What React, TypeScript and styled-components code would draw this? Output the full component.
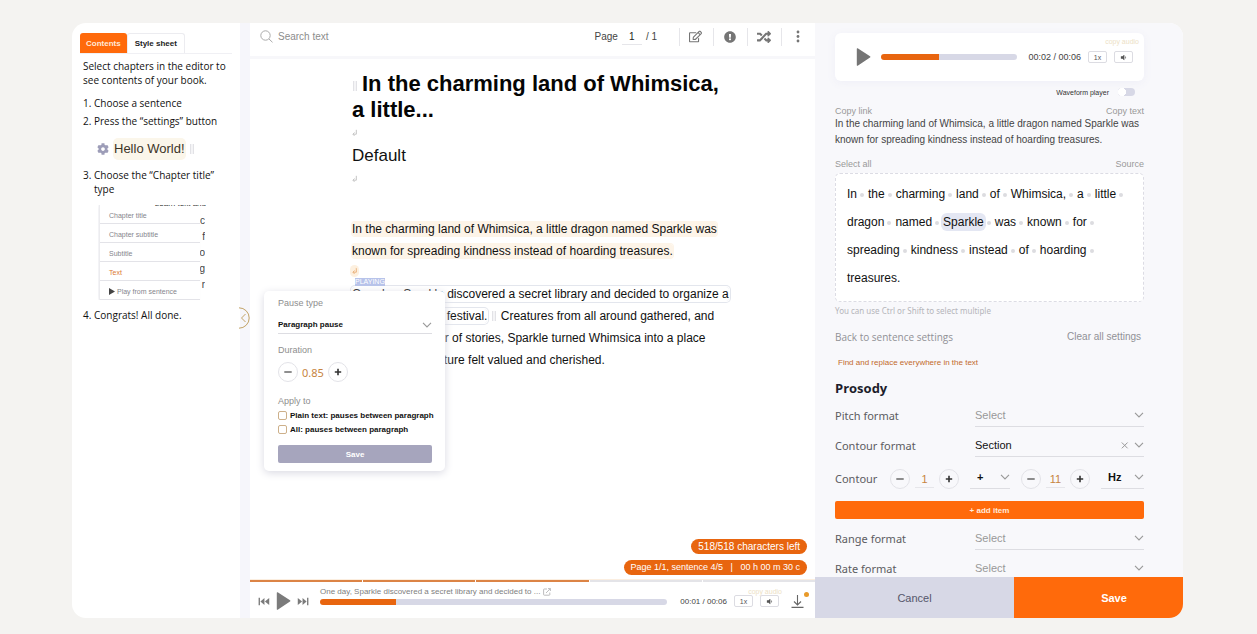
import React from 'react';
import styled, { createGlobalStyle, css } from 'styled-components';
import { FaCog, FaExclamationCircle, FaRandom, FaRegEdit, FaVolumeDown } from 'react-icons/fa';

const sans = '"Liberation Sans", Arial, sans-serif';
const humanist = '"Open Sans", "Noto Sans", sans-serif';

const orange = '#ff6a0b';
const deepOrange = '#e8650f';
const lilac = '#d7d8e6';
const mist = '#f8f8fb';
const cream = '#fdf4e8';

const GlobalStyle = createGlobalStyle`
  *, *::before, *::after { box-sizing: border-box; }
  body { margin: 0; background: #f4f3f1; font-family: ${sans}; color: #111; }
  button, input, select { font: inherit; color: inherit; margin: 0; padding: 0; border: 0; background: none; border-radius: 0; outline: none; }
  button { cursor: pointer; }
  h1, h2, p, ol { margin: 0; padding: 0; }
  a { color: inherit; text-decoration: none; }
  svg { display: block; flex: none; }
`;

const Page = styled.div`
  height: 100vh;
  padding: 23px 74px 16px 72px;
`;

const Workspace = styled.div`
  height: 100%;
  display: grid;
  grid-template-columns: 168px minmax(0, 1fr) 368px;
  border-radius: 14px;
  overflow: hidden;
  background: #fff;
`;

/* ---------- Contents sidebar ---------- */

const Sidebar = styled.aside`
  padding: 10px 8px 0;
  font-family: ${humanist};
  font-size: 10px;
  line-height: 14px;
`;

const Tabs = styled.div`
  display: flex;
  border-bottom: 1px solid #f0f0f4;
  margin-bottom: 5px;
`;

const Tab = styled.button<{ $active?: boolean }>`
  height: 20px;
  padding: 0 6px;
  font: bold 8px ${sans};
  border-radius: 3px 3px 0 0;
  ${p => p.$active
    ? css`background: ${orange}; color: #ffe9da;`
    : css`border: 1px solid #ececf0; border-bottom: 0; padding: 0 7px; color: #222;`}
`;

const Steps = styled.ol`
  list-style: none;
  padding: 0 3px;
`;

const Intro = styled.p`
  padding: 0 3px;
  margin-bottom: 9px;
`;

const Step = styled.li`
  display: grid;
  grid-template-columns: 11px minmax(0, 1fr);
  margin-bottom: 4px;
`;

const Sample = styled.div`
  display: flex;
  align-items: center;
  gap: 5px;
  padding-left: 14px;
  margin: 11px 0 9px;
  font: 13px/20px ${sans};
  color: #3b3427;
  svg { color: #9d9db8; }
`;

const SampleText = styled.span`
  background: #fbf6ea;
  border-radius: 4px;
  box-shadow: 0 0 0 1px #fbf6ea;
`;

const Handle = styled.span`
  display: inline-block;
  width: 4px;
  height: 10px;
  border: solid #e2e2e6;
  border-width: 0 1px;
  background: #f4f4f6;
`;

const MenuShot = styled.div`
  display: grid;
  grid-template-columns: 102px 5px;
  width: 108px;
  position: relative;
  margin: 9px 0 8px 15px;
  overflow: hidden;
  font-family: ${sans};
`;

const ShotMenu = styled.div`
  border-left: 1px solid #ececef;
  box-shadow: -2px 0 4px #f0f0f3;
  margin-left: 1px;
`;

const ShotItem = styled.div<{ $accent?: boolean }>`
  display: flex;
  align-items: center;
  gap: 2px;
  height: 19px;
  padding: 3px 0 0 9px;
  border-bottom: 1px solid #e3e3e8;
  font-size: 7px;
  color: ${p => (p.$accent ? '#dc7b33' : '#85858c')};
`;

const ShotEdge = styled.div`
  display: flex;
  flex-direction: column;
  padding-top: 8px;
  direction: rtl;
  overflow: hidden;
  font-size: 10px;
  line-height: 16px;
  color: #444;
`;

const ShotHeading = styled.div`
  position: absolute;
  top: -5px;
  right: 0;
  font: 8px/8px ${sans};
  color: #333;
`;

/* ---------- Editor ---------- */

const Editor = styled.main`
  position: relative;
  display: flex;
  flex-direction: column;
  min-width: 0;
  border-left: 10px solid #f6f6fb;
`;

const CollapseButton = styled.button`
  position: absolute;
  left: -11px;
  top: 284px;
  width: 12px;
  height: 22px;
  color: #c2a266;
`;

const Toolbar = styled.header`
  display: flex;
  align-items: center;
  height: 36px;
  padding: 0 0 6px 10px;
  border-bottom: 3px solid #f7f7fa;
  font-size: 10px;
  color: #444;
`;

const SearchField = styled.label`
  display: flex;
  align-items: center;
  gap: 5px;
  flex: 1;
  color: #aaa;
  input { width: 120px; }
  input::placeholder { color: #8c8c8c; opacity: 1; }
`;

const Pager = styled.label`
  display: flex;
  align-items: center;
  gap: 4px;
  margin-right: 22px;
  input {
    width: 20px;
    height: 16px;
    text-align: center;
    border-bottom: 1px solid #e6e6ea;
    color: #222;
  }
`;

const ToolButton = styled.button`
  display: grid;
  place-items: center;
  width: 34px;
  height: 18px;
  padding-right: 2px;
  border-left: 1px solid #e6e6ea;
  color: #757575;
`;

const Document = styled.article`
  flex: 1;
  min-height: 0;
  max-width: 482px;
  padding: 12px 0 0 102px;
  font-size: 12px;
  line-height: 22px;
`;

const Title = styled.h1`
  font-size: 22px;
  line-height: 26px;
  color: #050505;
  ${Handle} { margin: 0 5px 0 1px; }
`;

const Subtitle = styled.p`
  font-size: 17px;
  line-height: 26px;
  color: #111;
`;

const BreakMark = styled.div<{ $tall?: boolean }>`
  display: flex;
  align-items: center;
  height: 20px;
  margin-bottom: ${p => (p.$tall ? '29px' : '0')};
  color: #c4c4c4;
`;

const PausedMark = styled.div`
  display: flex;
  align-items: center;
  height: 21px;
  padding-bottom: 3px;
  color: #eab27d;
  svg { background: #fdf0df; border-radius: 3px; box-shadow: 0 0 0 2px #fdf0df; }
`;

const Spoken = styled.span`
  background: ${cream};
  border-radius: 3px;
  box-shadow: 0 0 0 1px ${cream};
  -webkit-box-decoration-break: clone;
  box-decoration-break: clone;
`;

const Playing = styled.span`
  border-radius: 3px;
  box-shadow: 0 0 0 1px #fff, 0 0 0 2px #e3e6ed;
  -webkit-box-decoration-break: clone;
  box-decoration-break: clone;
`;

const PlayingParagraph = styled.p`
  position: relative;
  ${Handle} { margin: 0 1px 0 5px; vertical-align: -1px; }
`;

const PlayingTag = styled.span`
  position: absolute;
  left: 3px;
  top: -5px;
  font-size: 7px;
  line-height: 8px;
  color: #fff;
  background: #b7c3ea;
`;

const Badges = styled.div`
  display: flex;
  flex-direction: column;
  align-items: flex-end;
  gap: 6px;
  padding: 0 8px 4px 0;
`;

const Badge = styled.span<{ $large?: boolean }>`
  padding: 0 7px;
  border-radius: 8px;
  font-size: ${p => (p.$large ? '10px' : '9px')};
  line-height: 15px;
  white-space: pre;
  color: #fff;
  background: ${deepOrange};
`;

const Segments = styled.div`
  display: flex;
  gap: 1px;
  border-top: 1px solid #fbeee0;
`;

const Segment = styled.span<{ $done?: boolean }>`
  flex: 1;
  height: 2px;
  background: ${p => (p.$done ? '#dc8446' : '#e4e4e8')};
`;

const PlayerBar = styled.footer`
  display: flex;
  align-items: center;
  height: 36px;
  padding: 2px 11px 0 8px;
  color: #7b7b7b;
`;

const Transport = styled.div`
  display: flex;
  align-items: center;
  gap: 6px;
  margin-right: 11px;
  button { display: block; }
`;

const NowPlaying = styled.div`
  flex: 1;
  min-width: 0;
  margin-right: 13px;
  padding-bottom: 11px;
  font-size: 8px;
  line-height: 12px;
  color: #808080;
`;

const NowTitle = styled.div`
  display: flex;
  align-items: center;
  gap: 3px;
  height: 12px;
  margin-bottom: 1px;
  svg { color: #b5b5b8; }
`;

const Scrubber = styled.input.attrs({ type: 'range' })<{ $played: number }>`
  appearance: none;
  display: block;
  width: 100%;
  height: 6px;
  border-radius: 3px;
  background: linear-gradient(to right, ${deepOrange} ${p => p.$played}%, ${lilac} ${p => p.$played}%);
  &::-webkit-slider-thumb { appearance: none; width: 0; height: 6px; }
`;

const Clock = styled.span<{ $small?: boolean }>`
  font-size: ${p => (p.$small ? '8px' : '9px')};
  white-space: nowrap;
  color: #444;
`;

const Extras = styled.div`
  position: relative;
  display: flex;
  gap: 7px;
  margin-left: 7px;
`;

const SmallButton = styled.button`
  display: grid;
  place-items: center;
  width: 19px;
  height: 12px;
  font-size: 7px;
  color: #555;
  background: #fff;
  border: 1px solid #dcdce2;
  border-radius: 2px;
`;

const CopyAudio = styled.a<{ $raised?: boolean }>`
  position: absolute;
  right: ${p => (p.$raised ? '-6px' : '-3px')};
  bottom: ${p => (p.$raised ? '18px' : '12px')};
  font-size: 7px;
  line-height: 7px;
  white-space: nowrap;
  color: #eddfc6;
`;

const DownloadButton = styled.button`
  position: relative;
  margin-left: 12px;
  color: #666;
  &::after {
    content: '';
    position: absolute;
    right: -5px;
    top: -2px;
    width: 5px;
    height: 5px;
    border-radius: 50%;
    background: #e89a2a;
  }
`;

/* ---------- Pause popup ---------- */

const Popup = styled.form`
  position: absolute;
  left: 14px;
  top: 268px;
  width: 181px;
  padding: 6px 13px 8px 14px;
  border-radius: 5px;
  background: #fff;
  box-shadow: 0 2px 8px #d9d9e2;
  font-size: 8px;
  font-weight: bold;
`;

const Caption = styled.div`
  display: block;
  font-size: 9px;
  font-weight: normal;
  line-height: 13px;
  color: #8e8e8e;
`;

const SelectBox = styled.div<{ $muted?: boolean; $size?: number }>`
  position: relative;
  display: flex;
  align-items: center;
  height: 22px;
  padding-bottom: 2px;
  border-bottom: 1px solid #dddde2;
  font-size: ${p => p.$size ?? 11}px;
  color: ${p => (p.$muted ? '#999' : '#111')};
  select { appearance: none; flex: 1; min-width: 0; width: 100%; height: 100%; }
  svg { pointer-events: none; color: #999; }
`;

const PopupSelect = styled(SelectBox)`
  height: 18px;
  padding: 0;
  margin: 6px 0 10px;
`;

const DurationSlot = styled.div`
  padding: 5px 0 13px;
`;

const Stepper = styled.div<{ $plain?: boolean }>`
  display: grid;
  grid-template-columns: 20px ${p => (p.$plain ? '30px' : '19px')} 20px;
  gap: ${p => (p.$plain ? '0' : '5px')};
  align-items: center;
  input {
    width: 100%;
    height: 18px;
    text-align: center;
    font: 11px ${p => (p.$plain ? '"Noto Sans", sans-serif' : sans)};
    color: #c7843f;
    border-bottom: ${p => (p.$plain ? '0' : '1px solid #e6e6ea')};
  }
`;

const RoundButton = styled.button`
  display: grid;
  place-items: center;
  width: 20px;
  height: 20px;
  border: 1px solid #e3e3e8;
  border-radius: 50%;
  color: #333;
`;

const CheckLine = styled.label`
  display: flex;
  align-items: center;
  gap: 3px;
  height: 14px;
  white-space: nowrap;
  input {
    appearance: none;
    flex: none;
    width: 9px;
    height: 9px;
    border: 1px solid #cdb08a;
    border-radius: 2px;
  }
`;

const PopupSave = styled.button`
  width: 100%;
  height: 18px;
  margin-top: 9px;
  border-radius: 2px;
  color: #fff;
  background: #a6a5bd;
`;

/* ---------- Sentence settings ---------- */

const Settings = styled.section`
  display: flex;
  flex-direction: column;
  min-height: 0;
  background: ${mist};
`;

const SettingsBody = styled.div`
  flex: 1;
  min-height: 0;
  overflow-y: auto;
  scrollbar-width: none;
  padding: 10px 39px 0 20px;
`;

const AudioCard = styled.div`
  display: flex;
  align-items: center;
  height: 48px;
  padding: 0 11px 0 21px;
  border-radius: 6px;
  background: #fff;
  box-shadow: 0 2px 10px #efeff7;
  color: #757575;
  ${Scrubber} { flex: 1; min-width: 0; width: auto; margin: 0 11px 0 10px; }
`;

const SwitchLine = styled.label`
  display: flex;
  align-items: center;
  justify-content: flex-end;
  gap: 9px;
  height: 22px;
  padding-right: 9px;
  font-size: 7px;
  color: #333;
  input {
    appearance: none;
    width: 17px;
    height: 8px;
    border-radius: 4px;
    background: radial-gradient(circle at 4px 4px, #fff 4px, ${lilac} 4px);
  }
`;

const LinkRow = styled.div`
  display: flex;
  justify-content: space-between;
  font-size: 9px;
  line-height: 9px;
  color: #999;
  margin-top: 4px;
`;

const Quote = styled.p`
  font-size: 10px;
  line-height: 16px;
  color: #444;
  margin-bottom: 12px;
`;

const WordBox = styled.div`
  display: flex;
  flex-wrap: wrap;
  margin-top: 4px;
  padding: 6px 6px 9px 11px;
  border: 1px dashed #dcdce4;
  border-radius: 5px;
  background: #fff;
  font-size: 12px;
`;

const Word = styled.span<{ $selected?: boolean }>`
  display: flex;
  align-items: center;
  height: 28px;
  span {
    line-height: 14px;
    ${p => p.$selected && css`background: #e4e7f3; border-radius: 4px; box-shadow: 0 0 0 2px #e4e7f3;`}
  }
  &:not(:last-child)::after {
    content: '';
    width: 4px;
    height: 4px;
    margin: 2px 4px 0 3px;
    border-radius: 50%;
    background: #dcdce0;
  }
`;

const Hint = styled.p`
  margin-top: 3px;
  font: 8px/12px "Noto Sans", sans-serif;
  color: #b5b5ba;
`;

const BackRow = styled.div`
  display: flex;
  justify-content: space-between;
  margin-top: 12px;
  padding-right: 3px;
  font-size: 10px;
  line-height: 16px;
  color: #919196;
  a:first-child { font-family: ${humanist}; }
`;

const FindLink = styled.a`
  display: block;
  margin-top: 12px;
  padding-left: 3px;
  font-size: 8px;
  line-height: 12px;
  color: #c26a2c;
`;

const GroupTitle = styled.h2`
  margin-top: 10px;
  font: bold 13px/18px ${humanist};
  color: #1d1d2b;
`;

const FieldRow = styled.div`
  display: grid;
  grid-template-columns: 140px minmax(0, 1fr);
  align-items: center;
  height: 22px;
  margin-top: 8px;
`;

const FieldLabel = styled.label`
  font: 11px/16px "Noto Sans", sans-serif;
  color: #5c5c61;
`;

const ContourRow = styled.div`
  display: grid;
  grid-template-columns: 44px 69px 40px 69px 43px;
  justify-content: space-between;
  align-items: center;
  height: 20px;
  margin-top: 12px;
  ${SelectBox} { padding: 0 0 4px 7px; font-weight: bold; height: 20px; }
`;

const AddButton = styled.button`
  display: block;
  width: 100%;
  height: 18px;
  margin: 12px 0 9px;
  border-radius: 2px;
  font-size: 8px;
  font-weight: bold;
  color: #ffe9da;
  background: ${orange};
`;

const ActionBar = styled.footer`
  display: grid;
  grid-template-columns: 199px minmax(0, 1fr);
  height: 41px;
  font-size: 11px;
`;

const ActionButton = styled.button<{ $primary?: boolean }>`
  color: ${p => (p.$primary ? '#fff' : '#55566a')};
  background: ${p => (p.$primary ? orange : lilac)};
  ${p => p.$primary && css`font-weight: bold; padding-left: 31px;`}
`;

/* ---------- Drawings ---------- */

const Chevron = () => (
  <svg width="10" height="6" viewBox="0 0 10 6" fill="none" stroke="currentColor" strokeWidth="1.1">
    <path d="M1 .8 5 5 9 .8" />
  </svg>
);

const PlayIcon = () => (
  <svg width="15" height="18" viewBox="0 0 15 18" fill="currentColor">
    <path d="M.8.8C.8.3 1.300 0 1.700.3L14 8.300c.5.300.5 1 0 1.300L1.700 17.700c-.4.300-.9 0-.9-.5Z" />
  </svg>
);

const SkipIcon = ({ back }: { back?: boolean }) => (
  <svg width="12" height="9" viewBox="0 0 13 10" fill="currentColor">
    {back
      ? <path d="M.5.8H2v8.400H.5ZM7 1v8L2.500 5ZM12.300 1v8L7.500 5Z" />
      : <path d="M11 .8h1.500v8.400H11ZM6 1v8l4.500-4ZM.7 1v8l4.800-4Z" />}
  </svg>
);

const Sign = ({ plus }: { plus?: boolean }) => (
  <svg width="8" height="8" viewBox="0 0 8 8" stroke="currentColor">
    <path d={plus ? 'M.8 4h6.400M4 .8v6.400' : 'M.3 4h7.400'} strokeWidth={plus ? 1.6 : 1.1} />
  </svg>
);

const ReturnIcon = () => (
  <svg width="5" height="8" viewBox="0 0 5 8" fill="none" stroke="currentColor" strokeWidth="1">
    <path d="M4.300.8v4.400H1M2.500 3.500.9 5.200l1.600 1.700" />
  </svg>
);

const SearchIcon = () => (
  <svg width="13" height="13" viewBox="0 0 13 13" fill="none" stroke="currentColor" strokeWidth="1">
    <circle cx="5.500" cy="5.500" r="4.700" />
    <path d="m9 9 3.500 3.300" />
  </svg>
);

const LinkOutIcon = () => (
  <svg width="8" height="8" viewBox="0 0 8 8" fill="none" stroke="currentColor" strokeWidth=".9">
    <path d="M4 1H1.200Q.6 1 .6 1.600v5q0 .6.6.6h5q.6 0 .6-.6V4.500M3 5l4.300-4.400M5 .6h2.400V3" />
  </svg>
);

const DownloadIcon = () => (
  <svg width="13" height="15" viewBox="0 0 13 15" fill="none" stroke="currentColor" strokeWidth="1.100">
    <path d="M6.500 1v9.500M3 7.500l3.500 3.400L10 7.500M.5 13.400h12" />
  </svg>
);

const DotsIcon = () => (
  <svg width="4" height="13" viewBox="0 0 4 13" fill="currentColor">
    <circle cx="2" cy="2" r="1.400" />
    <circle cx="2" cy="6.500" r="1.400" />
    <circle cx="2" cy="11" r="1.400" />
  </svg>
);

const CollapseIcon = () => (
  <svg width="12" height="22" viewBox="0 0 12 22" fill="none" stroke="currentColor" strokeWidth="1">
    <path d="M0 .8a10.200 10.200 0 0 1 0 20.400M6.500 7 2.500 11l4 4" />
  </svg>
);

/* ---------- Composition ---------- */

const words = 'In the charming land of Whimsica, a little dragon named Sparkle was known for spreading kindness instead of hoarding treasures.'.split(' ');

const AudioExtras = ({ raised }: { raised?: boolean }) => (
  <Extras>
    <SmallButton type="button">1x</SmallButton>
    <SmallButton type="button" aria-label="Volume"><FaVolumeDown size={7} /></SmallButton>
    <CopyAudio href="#audio" $raised={raised}>copy audio</CopyAudio>
  </Extras>
);

const NumberStepper = ({ label, value, plain }: { label: string; value: string; plain?: boolean }) => (
  <Stepper $plain={plain}>
    <RoundButton type="button" aria-label={`Decrease ${label}`}><Sign /></RoundButton>
    <input aria-label={label} defaultValue={value} />
    <RoundButton type="button" aria-label={`Increase ${label}`}><Sign plus /></RoundButton>
  </Stepper>
);

const SelectField = ({ id, label, value, clearable }: { id: string; label: string; value?: string; clearable?: boolean }) => (
  <FieldRow>
    <FieldLabel htmlFor={id}>{label}</FieldLabel>
    <SelectBox $muted={!value}>
      <select id={id}><option>{value ?? 'Select'}</option></select>
      {clearable && (
        <svg width="13" height="8" viewBox="0 0 13 8" fill="none" stroke="currentColor">
          <path d="m.8 1.500 5.800 5.800M6.600 1.500.8 7.300" />
        </svg>
      )}
      <Chevron />
    </SelectBox>
  </FieldRow>
);

const ContentsPanel = () => (
  <Sidebar>
    <Tabs role="tablist">
      <Tab role="tab" aria-selected $active>Contents</Tab>
      <Tab role="tab" aria-selected={false}>Style sheet</Tab>
    </Tabs>
    <Intro>Select chapters in the editor to see contents of your book.</Intro>
    <Steps>
      <Step><span>1.</span><span>Choose a sentence</span></Step>
      <Step><span>2.</span><span>Press the “settings” button</span></Step>
      <Sample><FaCog size={12} /><SampleText>Hello World!</SampleText><Handle /></Sample>
      <Step><span>3.</span><span>Choose the “Chapter title” type</span></Step>
      <MenuShot>
        <ShotHeading>Learn text and</ShotHeading>
        <ShotMenu>
          <ShotItem>Chapter title</ShotItem>
          <ShotItem>Chapter subtitle</ShotItem>
          <ShotItem>Subtitle</ShotItem>
          <ShotItem $accent>Text</ShotItem>
          <ShotItem>
            <svg width="6" height="7" viewBox="0 0 6 7" fill="#444"><path d="M0 0v7l6-3.500Z" /></svg>
            Play from sentence
          </ShotItem>
        </ShotMenu>
        <ShotEdge><span>c</span><span>f</span><span>o</span><span>g</span><span>r</span></ShotEdge>
      </MenuShot>
      <Step><span>4.</span><span>Congrats! All done.</span></Step>
    </Steps>
  </Sidebar>
);

const PausePopup = () => (
  <Popup>
    <Caption as="label" htmlFor="pause-type">Pause type</Caption>
    <PopupSelect $size={8}>
      <select id="pause-type"><option>Paragraph pause</option></select>
      <Chevron />
    </PopupSelect>
    <Caption>Duration</Caption>
    <DurationSlot><NumberStepper label="Duration" value="0.85" plain /></DurationSlot>
    <Caption>Apply to</Caption>
    <CheckLine><input type="checkbox" />Plain text: pauses between paragraph</CheckLine>
    <CheckLine><input type="checkbox" />All: pauses between paragraph</CheckLine>
    <PopupSave type="button">Save</PopupSave>
  </Popup>
);

const EditorPanel = () => (
  <Editor>
    <Toolbar>
      <SearchField><SearchIcon /><input placeholder="Search text" /></SearchField>
      <Pager>Page<input defaultValue="1" /><span>/ 1</span></Pager>
      <ToolButton aria-label="Edit"><FaRegEdit size={13} /></ToolButton>
      <ToolButton aria-label="Report"><FaExclamationCircle size={12} /></ToolButton>
      <ToolButton aria-label="Shuffle"><FaRandom size={14} /></ToolButton>
      <ToolButton aria-label="More"><DotsIcon /></ToolButton>
    </Toolbar>
    <Document>
      <Title><Handle />In the charming land of Whimsica, a little...</Title>
      <BreakMark><ReturnIcon /></BreakMark>
      <Subtitle>Default</Subtitle>
      <BreakMark $tall><ReturnIcon /></BreakMark>
      <p>
        <Spoken>In the charming land of Whimsica, a little dragon named Sparkle was known for spreading kindness instead of hoarding treasures.</Spoken>
      </p>
      <PausedMark><ReturnIcon /></PausedMark>
      <PlayingParagraph>
        <PlayingTag>PLAYING</PlayingTag>
        <Playing>One day, Sparkle discovered a secret library and decided to organize a grand storytelling festival.</Playing>
        <Handle /> Creatures from all around gathered, and through the power of stories, Sparkle turned Whimsica into a place where every creature felt valued and cherished.
      </PlayingParagraph>
    </Document>
    <Badges>
      <Badge $large>518/518 characters left</Badge>
      <Badge>{'Page 1/1, sentence 4/5   |   00 h 00 m 30 c'}</Badge>
    </Badges>
    <Segments>
      {[true, true, true, false, false].map((done, i) => <Segment key={i} $done={done} />)}
    </Segments>
    <PlayerBar>
      <Transport>
        <button aria-label="Previous"><SkipIcon back /></button>
        <button aria-label="Play"><PlayIcon /></button>
        <button aria-label="Next"><SkipIcon /></button>
      </Transport>
      <NowPlaying>
        <NowTitle>One day, Sparkle discovered a secret library and decided to ...<LinkOutIcon /></NowTitle>
        <Scrubber aria-label="Playback position" $played={22} defaultValue={22} />
      </NowPlaying>
      <Clock $small>00:01 / 00:06</Clock>
      <AudioExtras />
      <DownloadButton aria-label="Download"><DownloadIcon /></DownloadButton>
    </PlayerBar>
    <CollapseButton aria-label="Collapse contents"><CollapseIcon /></CollapseButton>
    <PausePopup />
  </Editor>
);

const SettingsPanel = () => (
  <Settings>
    <SettingsBody>
      <AudioCard>
        <button aria-label="Play sentence"><PlayIcon /></button>
        <Scrubber aria-label="Sentence position" $played={43} defaultValue={43} />
        <Clock>00:02 / 00:06</Clock>
        <AudioExtras raised />
      </AudioCard>
      <SwitchLine>Waveform player<input type="checkbox" role="switch" /></SwitchLine>
      <LinkRow><a href="#link">Copy link</a><a href="#text">Copy text</a></LinkRow>
      <Quote>In the charming land of Whimsica, a little dragon named Sparkle was known for spreading kindness instead of hoarding treasures.</Quote>
      <LinkRow><a href="#all">Select all</a><a href="#source">Source</a></LinkRow>
      <WordBox>
        {words.map((word, i) => (
          <Word key={i} $selected={word === 'Sparkle'}><span>{word}</span></Word>
        ))}
      </WordBox>
      <Hint>You can use Ctrl or Shift to select multiple</Hint>
      <BackRow><a href="#sentence">Back to sentence settings</a><a href="#clear">Clear all settings</a></BackRow>
      <FindLink href="#find">Find and replace everywhere in the text</FindLink>
      <GroupTitle>Prosody</GroupTitle>
      <SelectField id="pitch" label="Pitch format" />
      <SelectField id="contour" label="Contour format" value="Section" clearable />
      <ContourRow>
        <FieldLabel as="span">Contour</FieldLabel>
        <NumberStepper label="Contour position" value="1" />
        <SelectBox>
          <select aria-label="Contour direction"><option>+</option></select>
          <Chevron />
        </SelectBox>
        <NumberStepper label="Contour amount" value="11" />
        <SelectBox>
          <select aria-label="Contour unit"><option>Hz</option></select>
          <Chevron />
        </SelectBox>
      </ContourRow>
      <AddButton type="button">+ add item</AddButton>
      <SelectField id="range" label="Range format" />
      <SelectField id="rate" label="Rate format" />
    </SettingsBody>
    <ActionBar>
      <ActionButton>Cancel</ActionButton>
      <ActionButton $primary>Save</ActionButton>
    </ActionBar>
  </Settings>
);

export default function App() {
  return (
    <Page>
      <GlobalStyle />
      <Workspace>
        <ContentsPanel />
        <EditorPanel />
        <SettingsPanel />
      </Workspace>
    </Page>
  );
}
